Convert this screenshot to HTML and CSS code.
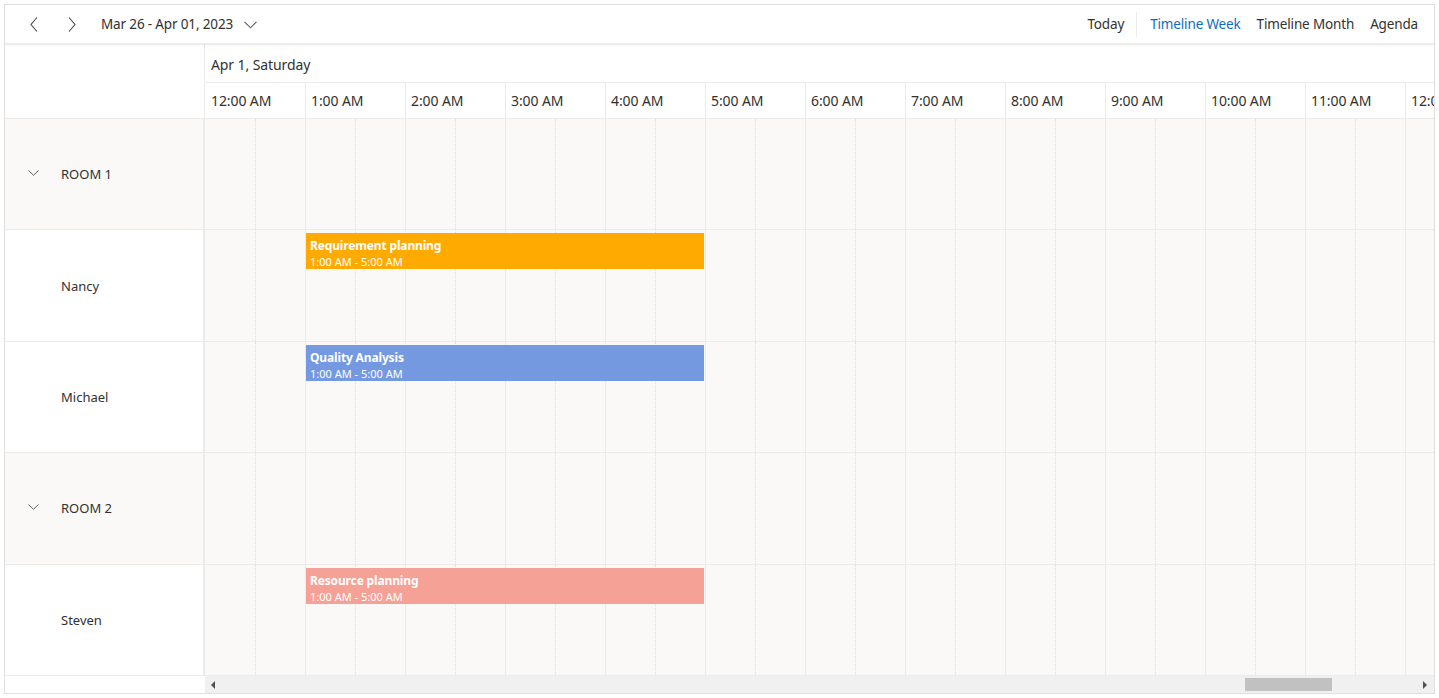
FILE: index.html
```html
<!DOCTYPE html>
<html>
<head>
<meta charset="utf-8">
<link rel="stylesheet" href="styles.css">
</head>
<body>
<div class="scheduler">
  <div class="toolbar">
    <div class="tb-left">
      <span class="nav-btn prev"><svg width="8" height="15" viewBox="0 0 8 15"><path d="M7 0.5 L1 7.5 L7 14.5" fill="none" stroke="#484644" stroke-width="1.1"/></svg></span>
      <span class="nav-btn next"><svg width="8" height="15" viewBox="0 0 8 15"><path d="M1 0.5 L7 7.5 L1 14.5" fill="none" stroke="#484644" stroke-width="1.1"/></svg></span>
      <span class="date-range">Mar 26 - Apr 01, 2023</span>
      <svg class="dd" width="13" height="8" viewBox="0 0 13 8"><path d="M0.5 0.8 L6.5 6.8 L12.5 0.8" fill="none" stroke="#605e5c" stroke-width="1.1"/></svg>
    </div>
    <div class="tb-right">
      <span class="tb-item">Today</span>
      <span class="tb-sep"></span>
      <span class="tb-item active">Timeline Week</span>
      <span class="tb-item">Timeline Month</span>
      <span class="tb-item">Agenda</span>
    </div>
  </div>
  <div class="body">
    <div class="res-col">
      <div class="res-header"></div>
      <div class="res-row group"><svg class="exp" width="11" height="6" viewBox="0 0 11 6"><path d="M0.5 0.5 L5.5 5.3 L10.5 0.5" fill="none" stroke="#605e5c" stroke-width="1"/></svg><span>ROOM 1</span></div>
      <div class="res-row child"><span>Nancy</span></div>
      <div class="res-row child"><span>Michael</span></div>
      <div class="res-row group"><svg class="exp" width="11" height="6" viewBox="0 0 11 6"><path d="M0.5 0.5 L5.5 5.3 L10.5 0.5" fill="none" stroke="#605e5c" stroke-width="1"/></svg><span>ROOM 2</span></div>
      <div class="res-row child"><span>Steven</span></div>
      <div class="res-foot"></div>
    </div>
    <div class="time-col">
      <div class="date-row">Apr 1, Saturday</div>
      <div class="time-row">
        <div class="th">12:00 AM</div><div class="th">1:00 AM</div><div class="th">2:00 AM</div><div class="th">3:00 AM</div><div class="th">4:00 AM</div><div class="th">5:00 AM</div><div class="th">6:00 AM</div><div class="th">7:00 AM</div><div class="th">8:00 AM</div><div class="th">9:00 AM</div><div class="th">10:00 AM</div><div class="th">11:00 AM</div><div class="th">12:00 PM</div>
      </div>
      <div class="rows">
        <div class="trow">
          <div class="hc"></div><div class="hc"></div><div class="hc"></div><div class="hc"></div><div class="hc"></div><div class="hc"></div><div class="hc"></div><div class="hc"></div><div class="hc"></div><div class="hc"></div><div class="hc"></div><div class="hc"></div><div class="hc"></div>
        </div>
        <div class="trow">
          <div class="hc"></div><div class="hc"></div><div class="hc"></div><div class="hc"></div><div class="hc"></div><div class="hc"></div><div class="hc"></div><div class="hc"></div><div class="hc"></div><div class="hc"></div><div class="hc"></div><div class="hc"></div><div class="hc"></div>
          <div class="event orange"><div class="ev-title">Requirement planning</div><div class="ev-time">1:00 AM - 5:00 AM</div></div>
        </div>
        <div class="trow">
          <div class="hc"></div><div class="hc"></div><div class="hc"></div><div class="hc"></div><div class="hc"></div><div class="hc"></div><div class="hc"></div><div class="hc"></div><div class="hc"></div><div class="hc"></div><div class="hc"></div><div class="hc"></div><div class="hc"></div>
          <div class="event blue"><div class="ev-title">Quality Analysis</div><div class="ev-time">1:00 AM - 5:00 AM</div></div>
        </div>
        <div class="trow">
          <div class="hc"></div><div class="hc"></div><div class="hc"></div><div class="hc"></div><div class="hc"></div><div class="hc"></div><div class="hc"></div><div class="hc"></div><div class="hc"></div><div class="hc"></div><div class="hc"></div><div class="hc"></div><div class="hc"></div>
        </div>
        <div class="trow">
          <div class="hc"></div><div class="hc"></div><div class="hc"></div><div class="hc"></div><div class="hc"></div><div class="hc"></div><div class="hc"></div><div class="hc"></div><div class="hc"></div><div class="hc"></div><div class="hc"></div><div class="hc"></div><div class="hc"></div>
          <div class="event salmon"><div class="ev-title">Resource planning</div><div class="ev-time">1:00 AM - 5:00 AM</div></div>
        </div>
      </div>
      <div class="hscroll">
        <span class="arrow left"></span>
        <div class="track"><div class="thumb"></div></div>
        <span class="arrow right"></span>
      </div>
    </div>
  </div>
</div>
</body>
</html>
```

FILE: styles.css
```css
* { box-sizing: border-box; }
html, body { margin: 0; padding: 0; background: #fff; }
body {
  font-family: "Segoe UI", "Noto Sans", "Open Sans", sans-serif;
  color: #323130;
  font-size: 14px;
}
.scheduler {
  margin: 4px;
  width: 1431px;
  height: 690px;
  border: 1px solid #e1dfdd;
  display: flex;
  flex-direction: column;
  overflow: hidden;
}
.toolbar {
  height: 39px;
  flex: none;
  display: flex;
  align-items: center;
  justify-content: space-between;
  border-bottom: 1px solid #edebe9;
  box-shadow: 0 1px 2px rgba(0,0,0,0.10);
  position: relative;
  z-index: 2;
  background: #fff;
}
.tb-left { display: flex; align-items: center; height: 100%; }
.nav-btn { display: flex; align-items: center; justify-content: center; width: 38px; height: 100%; }
.nav-btn.prev { margin-left: 10px; }
.date-range { margin-left: 10px; font-size: 13.5px; letter-spacing: -0.15px; color: #323130; }
.dd { margin-left: 11px; margin-top: 1px; }
.tb-right { display: flex; align-items: center; height: 100%; padding-right: 16px; }
.tb-item { font-size: 13.5px; letter-spacing: -0.15px; color: #323130; margin-left: 16px; white-space: nowrap; }
.tb-item:first-child { margin-left: 0; }
.tb-item.active { color: #0f6cbd; }
.tb-sep { width: 1px; height: 25px; background: #edebe9; margin-left: 12px; margin-right: -3px; }

.body { flex: 1; display: flex; min-height: 0; }
.res-col {
  width: 200px;
  flex: none;
  display: flex;
  flex-direction: column;
}
.res-header { height: 75px; flex: none; border-bottom: 1px solid #edebe9; border-right: 1px solid #edebe9; }
.res-row {
  flex: 1;
  display: flex;
  align-items: center;
  border-bottom: 1px solid #edebe9;
  border-right: 2px solid #edebe9;
  font-size: 13px;
  padding-left: 56px;
}
.res-row.group { background: #faf9f8; padding-left: 23px; }
.res-row.group .exp { margin-right: 22px; margin-top: -2px; }
.res-foot { height: 17px; flex: none; }

.time-col { flex: 1; min-width: 0; display: flex; flex-direction: column; overflow: hidden; }
.date-row {
  height: 39px; flex: none;
  border-bottom: 1px solid #edebe9;
  padding-left: 6px;
  padding-top: 2px;
  display: flex; align-items: center;
  font-size: 14px;
  letter-spacing: -0.1px;
  white-space: nowrap;
}
.time-row { height: 36px; flex: none; display: flex; border-bottom: 1px solid #edebe9; }
.th {
  width: 100px; flex: none;
  border-left: 1px solid #edebe9;
  padding-left: 5px;
  display: flex; align-items: center;
  font-size: 14px; letter-spacing: -0.1px; white-space: nowrap;
}
.th:first-child { border-left: none; padding-left: 6px; }
.rows { flex: 1; display: flex; flex-direction: column; min-height: 0; }
.trow {
  flex: 1;
  display: flex;
  position: relative;
  border-bottom: 1px solid #edebe9;
  background: #faf9f8;
}
.hc {
  width: 100px; flex: none;
  border-left: 1px solid #edebe9;
  position: relative;
}
.hc:first-child { border-left: none; }
.hc::after {
  content: "";
  position: absolute;
  top: 0; bottom: 0;
  left: 49px;
  border-left: 1px dotted #e1dfdd;
}
.hc:first-child::after { left: 50px; }
.event {
  position: absolute;
  left: 101px;
  top: 3px;
  width: 398px;
  height: 36px;
  padding: 5px 4px 0;
  color: #fff;
  overflow: hidden;
}
.event.orange { background: #ffaa00; }
.event.blue { background: #7499e1; }
.event.salmon { background: #f5a196; }
.ev-title { font-size: 12px; font-weight: 700; line-height: 16px; letter-spacing: -0.15px; white-space: nowrap; }
.ev-time { font-size: 11px; line-height: 15px; white-space: nowrap; }

.hscroll {
  height: 17px; flex: none;
  background: #f0f0f0;
  display: flex; align-items: center;
}
.arrow { width: 0; height: 0; border-top: 4px solid transparent; border-bottom: 4px solid transparent; flex: none; }
.arrow.left { border-right: 4px solid #505050; margin-left: 6px; }
.arrow.right { border-left: 4px solid #505050; margin-right: 7px; }
.track { flex: 1; height: 100%; position: relative; }
.thumb { position: absolute; left: 1030px; top: 2px; width: 87px; height: 13px; background: #c1c1c1; }
```
